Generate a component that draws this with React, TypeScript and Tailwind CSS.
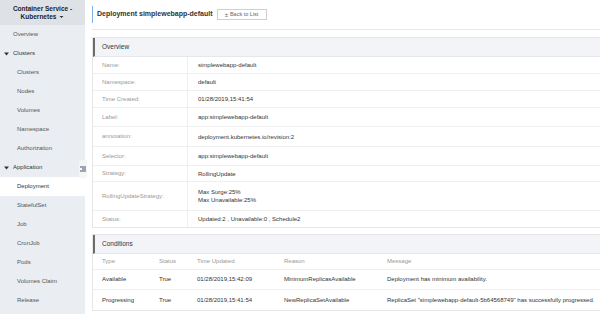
import React from "react";

const font = { fontFamily: '"Liberation Sans", Arial, sans-serif' };

const navItems = [
  { label: "Overview", level: 0 },
  { label: "Clusters", level: 0, group: true },
  { label: "Clusters", level: 1 },
  { label: "Nodes", level: 1 },
  { label: "Volumes", level: 1 },
  { label: "Namespace", level: 1 },
  { label: "Authorization", level: 1 },
  { label: "Application", level: 0, group: true },
  { label: "Deployment", level: 1, active: true },
  { label: "StatefulSet", level: 1 },
  { label: "Job", level: 1 },
  { label: "CronJob", level: 1 },
  { label: "Pods", level: 1 },
  { label: "Volumes Claim", level: 1 },
  { label: "Release", level: 1 },
];

const overviewRows = [
  { label: "Name:", value: ["simplewebapp-default"], h: "h-[17px]" },
  { label: "Namespace:", value: ["default"], h: "h-[17px]" },
  { label: "Time Created:", value: ["01/28/2019,15:41:54"], h: "h-[17px]" },
  { label: "Label:", value: ["app:simplewebapp-default"], h: "h-[19px]" },
  { label: "annotation:", value: ["deployment.kubernetes.io/revision:2"], h: "h-[20px]" },
  { label: "Selector:", value: ["app:simplewebapp-default"], h: "h-[19px]" },
  { label: "Strategy:", value: ["RollingUpdate"], h: "h-[16px]" },
  { label: "RollingUpdateStrategy:", value: ["Max Surge:25%", "Max Unavailable:25%"], h: "h-[29px]" },
  { label: "Status:", value: ["Updated:2 ,  Unavailable:0 ,  Schedule2"], h: "h-[16px]" },
];

const conditions = [
  {
    type: "Available",
    status: "True",
    time: "01/28/2019,15:42:09",
    reason: "MinimumReplicasAvailable",
    message: "Deployment has minimum availability.",
  },
  {
    type: "Progressing",
    status: "True",
    time: "01/28/2019,15:41:54",
    reason: "NewReplicaSetAvailable",
    message: 'ReplicaSet "simplewebapp-default-5b64568749" has successfully progressed.',
  },
];

function Caret() {
  return (
    <svg width="5" height="4" viewBox="0 0 5 4" className="mr-[4px]">
      <path d="M0 0.5 L5 0.5 L2.5 3.5 Z" fill="#333" />
    </svg>
  );
}

function Sidebar() {
  return (
    <div className="relative w-[85px] shrink-0 bg-[#eaedf1] h-full">
      <div className="h-[25px] bg-[#dee2e7] flex flex-col items-center justify-center text-[6.5px] font-bold leading-[8px] text-[#222]">
        <span>Container Service -</span>
        <span className="flex items-center">
          Kubernetes
          <svg width="5" height="4" viewBox="0 0 5 4" className="ml-[3px]">
            <path d="M0.5 1 L4.5 1 L2.5 3 Z" fill="#333" />
          </svg>
        </span>
      </div>
      <ul className="text-[6px] text-[#555]">
        {navItems.map((item, i) => (
          <li
            key={i}
            className={
              "h-[19px] flex items-center " +
              (item.active ? "bg-white text-[#333] " : "") +
              (item.level === 1 ? "pl-[17px]" : item.group ? "pl-[4px] text-[#333]" : "pl-[13px]")
            }
          >
            {item.group && <Caret />}
            {item.label}
          </li>
        ))}
      </ul>
      {/* collapse toggle */}
      <div className="absolute right-[-2px] top-[160px] w-[8px] h-[18px] bg-[#f4f6f8] rounded-l-[3px] flex items-center justify-center">
        <svg width="6" height="6" viewBox="0 0 6 6">
          <rect x="0" y="0.5" width="6" height="1" fill="#4a5568" />
          <rect x="2" y="2.5" width="4" height="1" fill="#4a5568" />
          <rect x="0" y="4.5" width="6" height="1" fill="#4a5568" />
        </svg>
      </div>
    </div>
  );
}

function PanelHeader({ title }: { title: string }) {
  return (
    <div className="h-[19px] bg-[#f3f4f8] border-l-2 border-[#6b6b6b] border-b border-b-[#e6e7eb] flex items-center pl-[7px] text-[6.5px] text-[#333]">
      {title}
    </div>
  );
}

export default function App() {
  return (
    <div className="flex w-[600px] h-[314px] overflow-hidden bg-white" style={font}>
      <Sidebar />
      <div className="flex-1 pl-[7px]">
        <div className="h-[30px] border-b border-[#e8e8e8] flex items-center">
          <div className="border-l border-[#7fb2e5] h-[17px] flex items-center pl-[4px] text-[7px] font-semibold text-[#333]">
            Deployment simplewebapp-default
          </div>
          <button className="ml-[4px] h-[11px] w-[50px] border border-[#cfcfcf] bg-white flex items-center justify-center text-[5.5px] text-[#666]">
            <span className="mr-[2px] text-[6px] leading-none">±</span>
            Back to List
          </button>
        </div>

        <div className="mt-[7px] border-t border-b border-l border-[#e6e6e6]">
          <PanelHeader title="Overview" />
          {overviewRows.map((r, i) => (
            <div
              key={i}
              className={"flex text-[6px] border-b border-[#efefef] last:border-b-0 " + r.h}
            >
              <div className="w-[95px] shrink-0 pl-[9px] flex items-center text-[#999] border-r border-[#efefef]">
                {r.label}
              </div>
              <div className="pl-[10px] flex flex-col justify-center text-[#333] leading-[8px]">
                {r.value.map((v, j) => (
                  <span key={j}>{v}</span>
                ))}
              </div>
            </div>
          ))}
        </div>

        <div className="mt-[6px] border-t border-b border-l border-[#e6e6e6]">
          <PanelHeader title="Conditions" />
          <div className="flex h-[16px] items-center text-[6px] text-[#999] border-b border-[#efefef]">
            <div className="w-[66px] shrink-0 pl-[9px]">Type</div>
            <div className="w-[38px] shrink-0">Status</div>
            <div className="w-[87px] shrink-0">Time Updated</div>
            <div className="w-[103px] shrink-0">Reason</div>
            <div>Message</div>
          </div>
          {conditions.map((c, i) => (
            <div
              key={i}
              className="flex h-[20px] items-center text-[6px] text-[#333] border-b border-[#efefef] last:border-b-0"
            >
              <div className="w-[66px] shrink-0 pl-[9px]">{c.type}</div>
              <div className="w-[38px] shrink-0">{c.status}</div>
              <div className="w-[87px] shrink-0">{c.time}</div>
              <div className="w-[103px] shrink-0">{c.reason}</div>
              <div className="whitespace-nowrap">{c.message}</div>
            </div>
          ))}
        </div>
      </div>
    </div>
  );
}
